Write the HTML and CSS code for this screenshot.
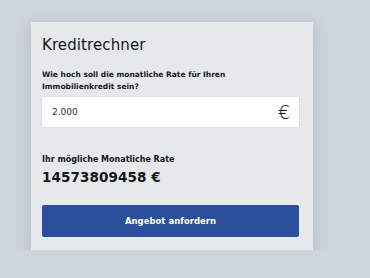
FILE: index.html
```html
<!DOCTYPE html>
<html lang="de">
  <head>
    <meta charset="UTF-8" />
    <meta name="viewport" content="width=device-width, initial-scale=1.0" />
    <title>Kreditrechner</title>
    <link rel="stylesheet" href="styles.css">
  </head>
  <body>
    <div class="calc">
      <h1 class="calc-title">Kreditrechner</h1>
      <label class="calc-label" for="rate">Wie hoch soll die monatliche Rate für Ihren Immobilienkredit sein?</label>
      <div class="calc-input">
        <input type="text" id="rate" value="2.000" />
        <span class="calc-euro">€</span>
      </div>
      <p class="calc-result-label">Ihr mögliche Monatliche Rate</p>
      <p class="calc-result">14573809458 €</p>
      <button type="button" class="calc-button">Angebot anfordern</button>
    </div>
  </body>
</html>
```

FILE: styles.css
```css
body {
  margin: 0;
  background-color: #cfd5dc;
  font-family: "DejaVu Sans", "Liberation Sans", sans-serif;
  color: #15171a;
}

.calc {
  width: 282px;
  height: 228px;
  margin: 22px 0 0 31px;
  padding: 13px 14px 0 11px;
  box-sizing: border-box;
  background-color: #e6e8eb;
  box-shadow: 0 4px 14px rgba(90, 105, 125, 0.25);
}

.calc-title {
  margin: 0;
  font-size: 15px;
  font-weight: normal;
  line-height: 20px;
  letter-spacing: 0.1px;
}

.calc-label {
  display: block;
  margin-top: 14px;
  font-size: 7.5px;
  font-weight: bold;
  line-height: 12px;
  width: 200px;
}

.calc-input {
  display: flex;
  align-items: center;
  height: 30px;
  margin-top: 4px;
  background-color: #fff;
  box-shadow: 0 0 1px rgba(0, 0, 0, 0.2);
}

.calc-input input {
  flex: 1;
  border: none;
  outline: none;
  background: transparent;
  padding: 0 0 0 10px;
  font-family: inherit;
  font-size: 9px;
  color: #2a2c30;
}

.calc-euro {
  padding-right: 9px;
  font-size: 19px;
  font-weight: 300;
  line-height: 1;
}

.calc-result-label {
  margin: 27px 0 0;
  font-size: 8px;
  font-weight: bold;
  line-height: 12px;
}

.calc-result {
  margin: 2px 0 0;
  font-size: 13.5px;
  font-weight: bold;
  line-height: 18px;
  letter-spacing: 0.1px;
}

.calc-button {
  display: block;
  width: 257px;
  height: 32px;
  margin-top: 19px;
  border: none;
  border-radius: 2px;
  background-color: #2b4f9b;
  color: #fff;
  font-family: inherit;
  font-size: 8.5px;
  font-weight: bold;
}
```
